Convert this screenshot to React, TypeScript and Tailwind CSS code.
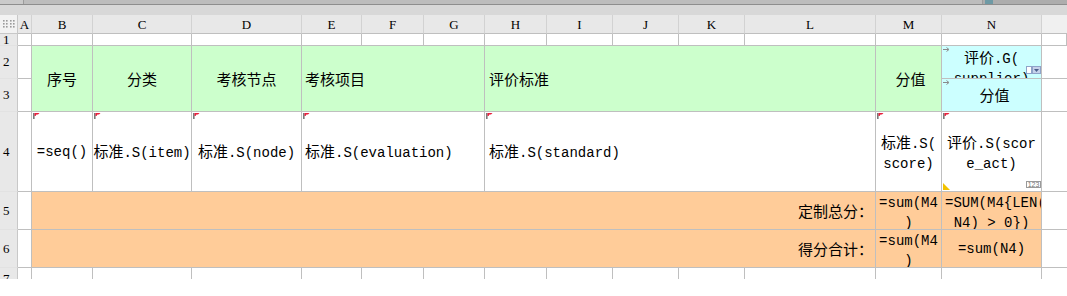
import React from "react";

const CJK = /[\u3000-\u303f\u4e00-\u9fff\uff00-\uffef]/;

function Txt({ s }: { s: string }) {
  const runs: { cjk: boolean; t: string }[] = [];
  for (const ch of s) {
    const c = CJK.test(ch);
    const last = runs[runs.length - 1];
    if (last && last.cjk === c) last.t += ch;
    else runs.push({ cjk: c, t: ch });
  }
  return (
    <>
      {runs.map((r, i) =>
        r.cjk ? (
          <span key={i} className="font-['Noto_Sans_CJK_SC',sans-serif] text-[15px]">
            {r.t}
          </span>
        ) : (
          <span key={i} className="font-['Liberation_Mono',monospace] text-[14px] whitespace-pre">
            {r.t}
          </span>
        )
      )}
    </>
  );
}

function Flag() {
  return (
    <svg className="absolute left-[1px] top-[1px]" width="7" height="6" viewBox="0 0 7 6">
      <rect x="0" y="0" width="1.6" height="6" fill="#7a7a7a" />
      <path d="M1.5 0 H6.5 L5 1.6 H3.4 L2.6 3 H1.5 Z" fill="#e8203c" />
    </svg>
  );
}

function Arrow() {
  return (
    <svg className="absolute left-[1px] top-[1px]" width="7" height="5" viewBox="0 0 7 5">
      <path d="M0 2.5 H5.5" stroke="#8a8a8a" strokeWidth="1" />
      <path d="M3.5 0.5 L6 2.5 L3.5 4.5" stroke="#8a8a8a" strokeWidth="1" fill="none" />
    </svg>
  );
}

const cell = "relative border-r border-b border-[#bfbfbf] overflow-hidden text-black leading-[18px]";
const hdr =
  "flex items-center justify-center pt-[2px] bg-[#e8e8e8] border-r border-b border-r-[#d2d2d2] border-b-[#bfbfbf] font-['Liberation_Serif',serif] text-[13px] text-black";
const rowHdr =
  "flex items-center pl-[3px] bg-[#e8e8e8] border-r border-b border-r-[#c8c8c8] border-b-[#e2e2e2] font-['Liberation_Serif',serif] text-[13px] text-black";

export default function App() {
  const letters = ["A", "B", "C", "D", "E", "F", "G", "H", "I", "J", "K", "L", "M", "N"];
  const hdrCols = [
    "col-start-2",
    "col-start-3",
    "col-start-4",
    "col-start-5",
    "col-start-6",
    "col-start-7",
    "col-start-8",
    "col-start-9",
    "col-start-10",
    "col-start-11",
    "col-start-12",
    "col-start-13",
    "col-start-14",
    "col-start-15",
  ];
  const rowStarts = ["row-start-2", "row-start-3", "row-start-4", "row-start-5", "row-start-6", "row-start-7", "row-start-8"];
  const emptyR1 = hdrCols.concat(["col-start-16"]);

  return (
    <div className="w-[1067px] h-[296px] bg-white overflow-hidden">
      {/* top scroll strip */}
      <div className="h-[5px] flex bg-[#adadad] border-b border-[#8e8e8e]">
        <div className="w-[24px] bg-[#cacaca] border-r border-[#9c9c9c]" />
        <div className="w-[959px] bg-[#bdbdbd] border-r border-[#9c9c9c]" />
        <div className="w-[2px]" />
        <div className="w-[8px] bg-[#6e9aa5]" />
      </div>
      <div className="h-[10px] bg-[#d8d8d8]" />

      <div className="h-[264px] overflow-hidden">
        <div className="grid grid-cols-[18px_14px_61px_99px_110px_60px_62px_61px_62px_66px_66px_66px_131px_66px_100px_25px] grid-rows-[19px_12px_33px_33px_80px_38px_38px_22px]">
          {/* corner */}
          <div className="col-start-1 row-start-1 flex items-center justify-center bg-[#f2f2f2] border-r border-b border-[#c8c8c8]">
            <svg width="12" height="8" viewBox="0 0 12 8">
              {[0, 1, 2].map((r) =>
                [0, 1, 2, 3].map((c) => (
                  <rect key={`${r}-${c}`} x={c * 3 + (c > 1 ? 1 : 0)} y={r * 3} width="1.6" height="1.6" fill="#9a9a9a" />
                ))
              )}
            </svg>
          </div>
          {letters.map((l, i) => (
            <div key={l} className={`${hdrCols[i]} row-start-1 ${hdr} ${l === "I" ? "bg-[#cdeefb]" : ""}`}>
              {l}
            </div>
          ))}
          <div className="col-start-16 row-start-1 bg-[#f0f0f0] border-b border-[#bfbfbf]" />

          {/* row headers */}
          {["1", "2", "3", "4", "5", "6", "7"].map((n, i) => (
            <div key={n} className={`col-start-1 ${rowStarts[i]} ${rowHdr}`}>
              {n}
            </div>
          ))}

          {/* row 1 */}
          {emptyR1.map((c) => (
            <div key={c} className={`${c} row-start-2 ${cell} bg-white`} />
          ))}

          {/* rows 2-3 */}
          <div className={`col-start-2 row-start-3 ${cell} bg-white`} />
          <div className={`col-start-2 row-start-4 ${cell} bg-white`} />
          <div className={`col-start-3 row-start-3 row-span-2 ${cell} bg-[#ccffcc] flex items-center justify-center`}>
            <Txt s="序号" />
          </div>
          <div className={`col-start-4 row-start-3 row-span-2 ${cell} bg-[#ccffcc] flex items-center justify-center`}>
            <Txt s="分类" />
          </div>
          <div className={`col-start-5 row-start-3 row-span-2 ${cell} bg-[#ccffcc] flex items-center justify-center`}>
            <Txt s="考核节点" />
          </div>
          <div className={`col-start-6 col-span-3 row-start-3 row-span-2 ${cell} bg-[#ccffcc] flex items-center pl-[3px]`}>
            <Txt s="考核项目" />
          </div>
          <div className={`col-start-9 col-span-5 row-start-3 row-span-2 ${cell} bg-[#ccffcc] flex items-center pl-[4px]`}>
            <Txt s="评价标准" />
          </div>
          <div className={`col-start-14 row-start-3 row-span-2 ${cell} bg-[#ccffcc] flex items-center justify-center pl-[4px]`}>
            <Txt s="分值" />
          </div>
          <div className={`col-start-15 row-start-3 ${cell} bg-[#ccffff] flex flex-col items-center pt-[2px]`}>
            <Arrow />
            <div className="whitespace-nowrap">
              <Txt s="评价.G(" />
            </div>
            <div className="whitespace-nowrap">
              <Txt s="supplier)" />
            </div>
            <div className="absolute right-0 bottom-[4px] flex h-[8px]">
              <div className="w-[6px] h-[8px] bg-white border border-[#8fa3c9]" />
              <div className="w-[9px] h-[8px] bg-[#c5d1ea] border border-[#8fa3c9] flex items-center justify-center">
                <svg width="5" height="3" viewBox="0 0 5 3">
                  <path d="M0 0 H5 L2.5 3 Z" fill="#4a5f8a" />
                </svg>
              </div>
            </div>
          </div>
          <div className={`col-start-15 row-start-4 ${cell} bg-[#ccffff] flex items-center justify-center pl-[6px]`}>
            <Arrow />
            <Txt s="分值" />
          </div>
          <div className="col-start-16 row-start-3 border-b border-[#bfbfbf]" />
          <div className="col-start-16 row-start-4 border-b border-[#bfbfbf]" />

          {/* row 4 */}
          <div className={`col-start-2 row-start-5 ${cell} bg-white`} />
          <div className={`col-start-3 row-start-5 ${cell} bg-white flex items-center justify-center`}>
            <Flag />
            <Txt s="=seq()" />
          </div>
          <div className={`col-start-4 row-start-5 ${cell} bg-white flex items-center justify-center`}>
            <Flag />
            <span className="whitespace-nowrap">
              <Txt s="标准.S(item)" />
            </span>
          </div>
          <div className={`col-start-5 row-start-5 ${cell} bg-white flex items-center justify-center`}>
            <Flag />
            <span className="whitespace-nowrap">
              <Txt s="标准.S(node)" />
            </span>
          </div>
          <div className={`col-start-6 col-span-3 row-start-5 ${cell} bg-white flex items-center pl-[3px]`}>
            <Flag />
            <span className="whitespace-nowrap">
              <Txt s="标准.S(evaluation)" />
            </span>
          </div>
          <div className={`col-start-9 col-span-5 row-start-5 ${cell} bg-white flex items-center pl-[4px]`}>
            <Flag />
            <span className="whitespace-nowrap">
              <Txt s="标准.S(standard)" />
            </span>
          </div>
          <div className={`col-start-14 row-start-5 ${cell} bg-white flex flex-col items-center justify-center pt-[2px]`}>
            <Flag />
            <div className="whitespace-nowrap">
              <Txt s="标准.S(" />
            </div>
            <div className="whitespace-nowrap">
              <Txt s="score)" />
            </div>
          </div>
          <div className={`col-start-15 row-start-5 ${cell} bg-white flex flex-col items-center justify-center pt-[2px]`}>
            <Flag />
            <div className="whitespace-nowrap">
              <Txt s="评价.S(scor" />
            </div>
            <div className="whitespace-nowrap">
              <Txt s="e_act)" />
            </div>
            <svg className="absolute left-[1px] bottom-[1px]" width="7" height="7" viewBox="0 0 7 7">
              <path d="M0 0 L0 7 L7 7 Z" fill="#f2c200" />
            </svg>
            <div className="absolute right-0 bottom-[3px] w-[15px] h-[7px] border border-[#9a9a9a] bg-white flex items-center justify-center font-['Liberation_Sans',sans-serif] text-[7px] leading-[5px] text-[#777]">
              123
            </div>
          </div>
          <div className="col-start-16 row-start-5 border-b border-[#bfbfbf]" />

          {/* row 5 */}
          <div className={`col-start-2 row-start-6 ${cell} bg-white`} />
          <div className={`col-start-3 col-span-11 row-start-6 ${cell} bg-[#ffcc99] flex items-center justify-end pr-[2px]`}>
            <Txt s="定制总分：" />
          </div>
          <div className={`col-start-14 row-start-6 ${cell} bg-[#ffcc99] flex flex-col items-center justify-center pt-[3px]`}>
            <div className="whitespace-nowrap">
              <Txt s="=sum(M4" />
            </div>
            <div className="whitespace-nowrap">
              <Txt s=")" />
            </div>
          </div>
          <div className={`col-start-15 row-start-6 ${cell} bg-[#ffcc99] flex flex-col items-center justify-center pt-[3px]`}>
            <div className="whitespace-nowrap self-start pl-[3px]">
              <Txt s="=SUM(M4{LEN(" />
            </div>
            <div className="whitespace-nowrap">
              <Txt s="N4) > 0})" />
            </div>
          </div>
          <div className="col-start-16 row-start-6 border-b border-[#bfbfbf]" />

          {/* row 6 */}
          <div className={`col-start-2 row-start-7 ${cell} bg-white`} />
          <div className={`col-start-3 col-span-11 row-start-7 ${cell} bg-[#ffcc99] flex items-center justify-end pr-[2px]`}>
            <Txt s="得分合计：" />
          </div>
          <div className={`col-start-14 row-start-7 ${cell} bg-[#ffcc99] flex flex-col items-center justify-center pt-[3px]`}>
            <div className="whitespace-nowrap">
              <Txt s="=sum(M4" />
            </div>
            <div className="whitespace-nowrap">
              <Txt s=")" />
            </div>
          </div>
          <div className={`col-start-15 row-start-7 ${cell} bg-[#ffcc99] flex items-center justify-center`}>
            <Txt s="=sum(N4)" />
          </div>
          <div className="col-start-16 row-start-7 border-b border-[#bfbfbf]" />

          {/* row 7 */}
          {emptyR1.slice(0, 14).map((c) => (
            <div key={c} className={`${c} row-start-8 ${cell} bg-white`} />
          ))}
        </div>
      </div>
    </div>
  );
}
